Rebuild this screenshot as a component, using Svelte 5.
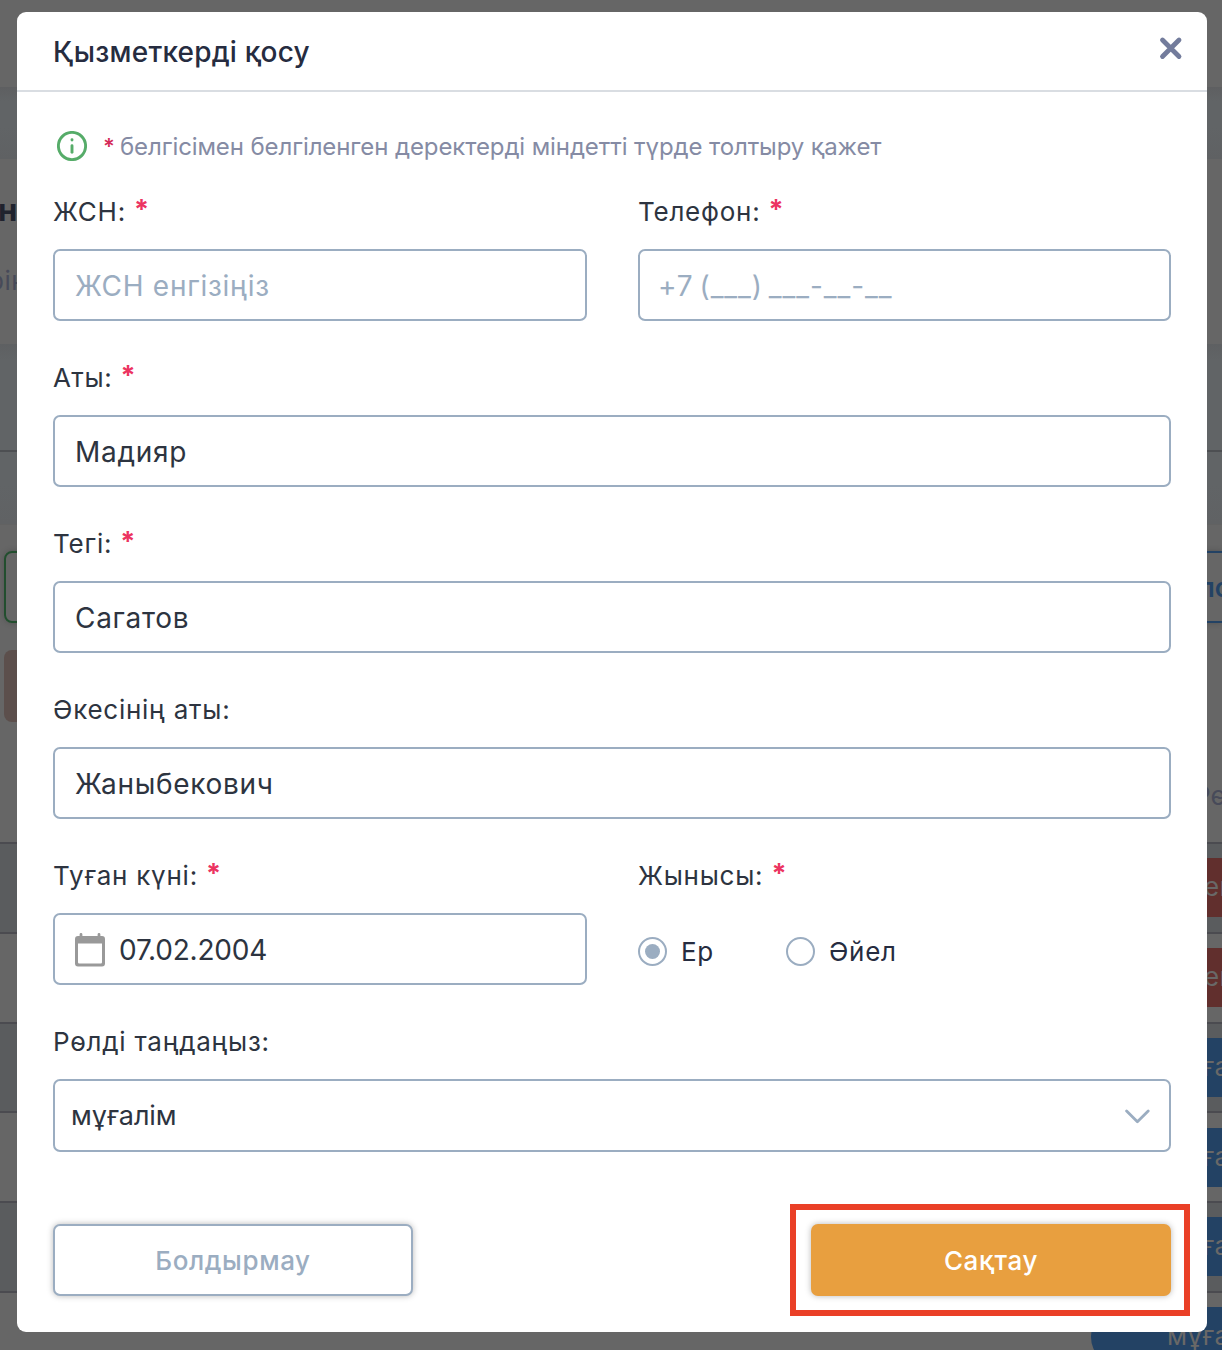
<script>
  const rows = [
    { shade: true, tone: 'red', label: 'ен' },
    { shade: false, tone: 'red', label: 'ен' },
    { shade: true, tone: 'blue', label: 'мұғалім' },
    { shade: false, tone: 'blue', label: 'мұғалім' },
    { shade: true, tone: 'blue', label: 'мұғалім' },
    { shade: false, tone: 'blue', label: 'мұғалім' }
  ];

  let firstName = $state('Мадияр');
  let lastName = $state('Сагатов');
  let patronymic = $state('Жаныбекович');
  let birthDate = $state('07.02.2004');
  let gender = $state('male');
</script>

{#snippet label(text, required)}
  <div class="label">
    <span>{text}</span>{#if required}<span class="star">*</span>{/if}
  </div>
{/snippet}

<div class="page">
  <div class="backdrop" aria-hidden="true">
    <div class="band top"></div>
    <div class="band gap-band"></div>
    <div class="band card">
      <div class="card-title">н</div>
      <div class="card-sub">рін</div>
    </div>
    <div class="band tabs"><div class="tabs-line"></div></div>
    <div class="band tools">
      <div class="tools-left">
        <div class="btn-green"></div>
        <div class="btn-pink"></div>
      </div>
      <div class="tools-right">
        <div class="btn-blue">по</div>
        <div class="col-title">Рөлі</div>
      </div>
    </div>
    {#each rows as row}
      <div class="row" class:shade={row.shade}>
        <div class="pill {row.tone}">{row.label}</div>
      </div>
    {/each}
  </div>

  <div class="modal" role="dialog" aria-label="Қызметкерді қосу">
    <header>
      <h1>Қызметкерді қосу</h1>
      <button class="close" aria-label="Жабу">
        <svg width="24" height="24" viewBox="0 0 24 24"><path d="M3.5 4 20 20.500M20 4 3.500 20.500" /></svg>
      </button>
    </header>

    <div class="body">
      <div class="hint">
        <svg class="info" width="30" height="30" viewBox="0 0 30 30">
          <circle cx="15" cy="15" r="13.6" />
          <path d="M15 14.800V21.200" />
          <path d="M15 8.800V9.100" />
        </svg>
        <span class="hint-star">*</span>
        <span>белгісімен белгіленген деректерді міндетті түрде толтыру қажет</span>
      </div>

      <div class="form">
        <div class="field">
          {@render label('ЖСН:', true)}
          <input placeholder="ЖСН енгізіңіз" />
        </div>
        <div class="field">
          {@render label('Телефон:', true)}
          <input class="phone" placeholder="+7 (___) ___-__-__" />
        </div>
        <div class="field wide">
          {@render label('Аты:', true)}
          <input bind:value={firstName} />
        </div>
        <div class="field wide">
          {@render label('Тегі:', true)}
          <input bind:value={lastName} />
        </div>
        <div class="field wide">
          {@render label('Әкесінің аты:', false)}
          <input bind:value={patronymic} />
        </div>
        <div class="field">
          {@render label('Туған күні:', true)}
          <div class="box date">
            <svg width="30" height="34" viewBox="0 0 30 34">
              <path fill-rule="evenodd" d="M4.6 1.4a1.4 1.4 0 0 1 2.8 0V3h15.2V1.4a1.4 1.4 0 0 1 2.8 0V3H27a3 3 0 0 1 3 3v24.500a3 3 0 0 1-3 3H3a3 3 0 0 1-3-3V6a3 3 0 0 1 3-3h1.600zM3 10.600V29.300a1.200 1.200 0 0 0 1.200 1.200h21.600a1.200 1.200 0 0 0 1.200-1.200V10.600z" />
            </svg>
            <span>{birthDate}</span>
          </div>
        </div>
        <div class="field">
          {@render label('Жынысы:', true)}
          <div class="radios">
            <button class="radio male" onclick={() => (gender = 'male')}>
              <span class="dot" class:on={gender === 'male'}></span>Ер
            </button>
            <button class="radio" onclick={() => (gender = 'female')}>
              <span class="dot" class:on={gender === 'female'}></span>Әйел
            </button>
          </div>
        </div>
        <div class="field wide">
          {@render label('Рөлді таңдаңыз:', false)}
          <div class="box select">
            <span>мұғалім</span>
            <svg width="26" height="16" viewBox="0 0 26 16"><path d="M2.600 3 13.400 13.800 24.200 3" /></svg>
          </div>
        </div>
      </div>

      <div class="actions">
        <button class="action cancel">Болдырмау</button>
        <div class="save-wrap">
          <button class="action save">Сақтау</button>
          <div class="marker"></div>
        </div>
      </div>
    </div>
  </div>
</div>

<style>
  :global(body) {
    background: #666;
  }
  * {
    box-sizing: border-box;
  }
  .page {
    position: relative;
    width: 1222px;
    height: 1350px;
    overflow: hidden;
    padding: 12px 15px 18px 17px;
    font-family: Inter, sans-serif;
    font-size: 26px;
    color: #2d3440;
  }
  button,
  input {
    font: inherit;
    color: inherit;
    letter-spacing: inherit;
  }

  /* dimmed page behind the dialog */
  .backdrop {
    position: absolute;
    inset: 0;
    display: flex;
    flex-direction: column;
    background: #666;
    color: #474a59;
  }
  .band {
    flex: none;
  }
  .top {
    height: 87px;
  }
  .gap-band {
    height: 72px;
    background: linear-gradient(#5e5f61, #616466 14px, #616466 40px, #5f6163);
  }
  .card {
    height: 185px;
    padding-top: 35px;
  }
  .card-title {
    height: 32px;
    line-height: 32px;
    font-size: 31px;
    font-weight: 700;
    color: #20232e;
    text-indent: -2px;
  }
  .card-sub {
    margin-top: 39px;
    height: 32px;
    line-height: 32px;
    text-indent: -12px;
    letter-spacing: 0.5px;
  }
  .tabs {
    height: 180px;
    background: linear-gradient(#5e6062, #616466 16px, #616466 140px, #606264);
    padding-top: 106px;
  }
  .tabs-line {
    height: 2px;
    background: #4d4f52;
  }
  .tools {
    height: 318px;
    border-top: 1px solid #626262;
    padding: 26px 0 0 4px;
    display: flex;
    justify-content: space-between;
  }
  .btn-green {
    width: 80px;
    height: 72px;
    border: 2px solid #224e2e;
    border-radius: 8px;
    box-shadow: 0 0 6px rgba(0, 0, 0, 0.2);
  }
  .btn-pink {
    width: 80px;
    height: 72px;
    margin-top: 27px;
    border-radius: 8px;
    background: #5c4f4c;
  }
  .tools-right {
    width: 60px;
  }
  .btn-blue {
    height: 72px;
    line-height: 70px;
    border: solid #234264;
    border-width: 2px 0;
    color: #234264;
    font-weight: 600;
    padding-left: 37px;
    box-shadow: 0 0 6px rgba(0, 0, 0, 0.2);
  }
  .col-title {
    margin-top: 157px;
    line-height: 32px;
    padding-left: 32px;
  }
  .row {
    flex: none;
    height: 89.75px;
    border-top: 2px solid #4b4b50;
    padding-top: 14.25px;
    display: flex;
    justify-content: flex-end;
    align-items: flex-start;
  }
  .shade {
    background: #5a5c5e;
  }
  .pill {
    width: 131px;
    height: 59px;
    flex: none;
    border-radius: 29px 0 0 29px;
    line-height: 58px;
    padding-left: 76px;
    color: #696867;
    letter-spacing: 0.4px;
    white-space: nowrap;
  }
  .red {
    background: #612f2d;
    padding-left: 113px;
  }
  .blue {
    background: #234264;
  }

  /* dialog */
  .modal {
    position: relative;
    height: 1320px;
    background: #fff;
    border-radius: 9px;
  }
  header {
    height: 80px;
    border-bottom: 2px solid #d9dde2;
    padding: 0 24px 0 36px;
    display: flex;
    justify-content: space-between;
  }
  h1 {
    margin: 0;
    font-size: 28px;
    line-height: 80px;
    font-weight: 550;
    letter-spacing: 0.2px;
    color: #262c40;
  }
  .close {
    width: 24px;
    height: 24px;
    margin-top: 24px;
    padding: 0;
    border: 0;
    background: none;
  }
  .close svg {
    display: block;
    fill: none;
    stroke: #737c9c;
    stroke-width: 4.8;
    stroke-linecap: round;
  }
  .body {
    padding: 36px;
  }
  .hint {
    height: 36px;
    padding-left: 4px;
    display: flex;
    align-items: center;
    font-size: 24px;
    letter-spacing: -0.1px;
    color: #858ba4;
    white-space: nowrap;
  }
  .info {
    flex: none;
    margin-right: 16px;
    fill: none;
    stroke: #56ac69;
    stroke-width: 2.9;
    stroke-linecap: round;
  }
  .hint-star {
    width: 17px;
    font-size: 22px;
    font-weight: 600;
    color: #d42a58;
  }
  .form {
    margin-top: 33px;
    display: grid;
    grid-template-columns: 534px 533px;
    column-gap: 51px;
    row-gap: 42px;
  }
  .wide {
    grid-column: 1 / -1;
  }
  .label {
    height: 29px;
    line-height: 29px;
    margin-bottom: 23px;
    letter-spacing: 0.75px;
    white-space: nowrap;
  }
  .star {
    position: relative;
    top: -2px;
    margin-left: 8px;
    font-size: 27px;
    color: #ec3461;
    font-weight: 700;
  }
  input,
  .box {
    display: flex;
    align-items: center;
    width: 100%;
    height: 72px;
    border: 2px solid #9badc1;
    border-radius: 7px;
    background: #fff;
    font-size: 28px;
    outline: none;
  }
  input {
    padding: 2px 20px 0 20px;
    letter-spacing: 0.7px;
  }
  input::placeholder {
    color: #9badc1;
    opacity: 1;
  }
  .phone {
    padding-left: 18px;
    letter-spacing: 0.95px;
    word-spacing: -3px;
  }
  .date {
    padding: 2px 20px 0;
    gap: 14px;
    letter-spacing: -0.2px;
  }
  .date svg {
    fill: #999;
  }
  .select {
    height: 73px;
    justify-content: space-between;
    padding: 0 19px 0 16px;
    font-size: 27px;
    letter-spacing: -0.1px;
  }
  .select svg {
    fill: none;
    stroke: #9badc1;
    stroke-width: 2.8;
    stroke-linecap: round;
    stroke-linejoin: round;
  }
  .radios {
    display: flex;
    height: 72px;
    padding-top: 5px;
    letter-spacing: 0.7px;
    color: #262c40;
  }
  .radio {
    display: flex;
    align-items: center;
    gap: 14px;
    padding: 0;
    border: 0;
    background: none;
  }
  .male {
    width: 148px;
  }
  .dot {
    width: 29px;
    height: 29px;
    border: 2px solid #9badc1;
    border-radius: 50%;
    display: grid;
    place-items: center;
  }
  .on::after {
    content: '';
    width: 15px;
    height: 15px;
    border-radius: 50%;
    background: #9badc1;
  }
  .actions {
    margin-top: 72px;
    display: flex;
    justify-content: space-between;
  }
  .action {
    display: block;
    width: 360px;
    height: 72px;
    border-radius: 7px;
    font-weight: 500;
    letter-spacing: 0.6px;
    padding: 0;
    box-shadow: 0 0 6px rgba(0, 0, 0, 0.28);
  }
  .cancel {
    border: 2px solid #9badc1;
    background: #fff;
    color: #9badc1;
  }
  .save {
    border: 0;
    background: #e89f3f;
    color: #fff;
  }
  .save-wrap {
    position: relative;
  }
  .marker {
    position: absolute;
    inset: -20px -19px -20px -21.500px;
    border: 6px solid #ea4027;
    pointer-events: none;
  }
</style>
